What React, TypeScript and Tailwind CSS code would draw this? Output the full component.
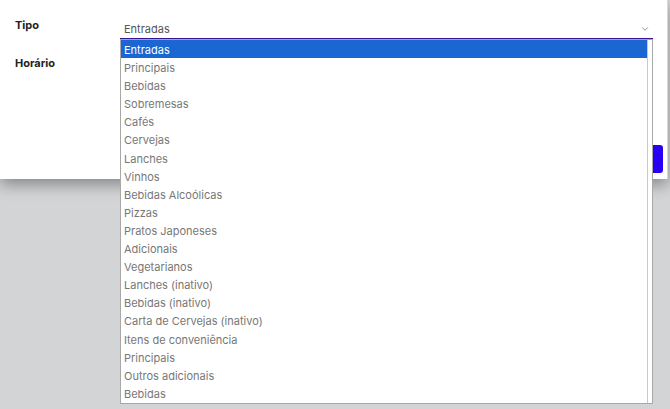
import { ChevronDown } from "lucide-react";

const options = [
  "Entradas",
  "Principais",
  "Bebidas",
  "Sobremesas",
  "Cafés",
  "Cervejas",
  "Lanches",
  "Vinhos",
  "Bebidas Alcoólicas",
  "Pizzas",
  "Pratos Japoneses",
  "Adicionais",
  "Vegetarianos",
  "Lanches (inativo)",
  "Bebidas (inativo)",
  "Carta de Cervejas (inativo)",
  "Itens de conveniência",
  "Principais",
  "Outros adicionais",
  "Bebidas",
];

export default function App() {
  return (
    <div
      className="relative h-[409px] w-[670px] overflow-hidden bg-[#d3d4d6]"
      style={{ fontFamily: "Inter, 'Noto Sans', sans-serif" }}
    >
      {/* modal */}
      <div className="flex h-[179px] w-[668px] flex-col border-r border-[#d8d8d8] bg-white shadow-[0_6px_14px_rgba(0,0,0,0.35)]">
        <div className="flex items-start pt-[16px]">
          <div className="w-[120px] pl-[15px] pt-[1px] text-[11px] font-bold text-[#222]">Tipo</div>
          <div className="flex h-[23px] w-[533px] items-center justify-between border-b border-[#3a1290] pl-[4px] pr-[3px] pt-[4px] text-[11px] text-[#555]">
            <span>Entradas</span>
            <ChevronDown size={10} strokeWidth={2} className="text-[#777]" />
          </div>
        </div>
        <div className="pl-[15px] pt-[16px] text-[11px] font-bold text-[#222]">Horário</div>
        <div className="mt-auto flex justify-end pb-[6px] pr-[4px]">
          <button className="h-[28px] w-[80px] rounded-[3px] bg-[#2a00f5] text-[11px] text-white">Salvar</button>
        </div>
      </div>

      {/* open select list */}
      <div className="absolute left-[120px] top-[39px] h-[365px] w-[533px] border border-[#a8a8a8] bg-white pr-[4px]">
        <div className="h-full border-r border-[#c8c8c8]">
          {options.map((o, i) => (
            <div
              key={i}
              className={
                i === 0
                  ? "h-[18.1px] bg-[#1a66d2] pl-[3px] pt-[1px] text-[11px] leading-[18.1px] text-white"
                  : "h-[18.1px] pl-[3px] pt-[1px] text-[11px] leading-[18.1px] text-[#777]"
              }
            >
              {o}
            </div>
          ))}
        </div>
      </div>
    </div>
  );
}
